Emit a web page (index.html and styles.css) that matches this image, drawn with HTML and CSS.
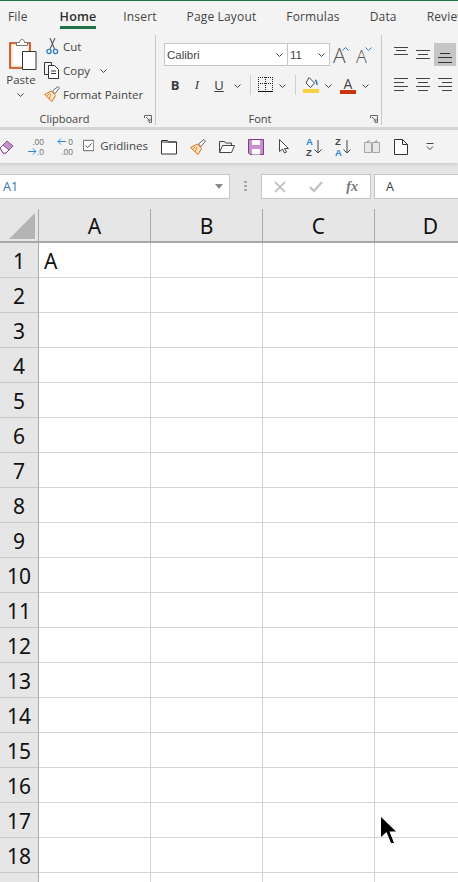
FILE: index.html
```html
<!DOCTYPE html>
<html lang="en">
<head>
<meta charset="utf-8">
<title>Excel</title>
<link rel="stylesheet" href="styles.css">
</head>
<body>
<div class="app">
  <header class="ribbon">
    <nav class="tabs">
      <span class="tab">File</span>
      <span class="tab active">Home</span>
      <span class="tab">Insert</span>
      <span class="tab">Page Layout</span>
      <span class="tab">Formulas</span>
      <span class="tab">Data</span>
      <span class="tab">Review</span>
    </nav>
    <div class="groups">
      <section class="group clipboard">
        <div class="group-body clip-body">
          <div class="paste">
            <svg class="paste-icon" width="28" height="31" viewBox="0 0 28 31"><path d="M1 4h20v25H1z" fill="#f8e4b0" stroke="#c5421c" stroke-width="1.600"/><path d="M3.500 6.500h15v20h-15z" fill="#fff"/><path d="M7.500 6.500V3.500h3c0-4 5-4 5 0h3v3z" fill="#fff" stroke="#777"/><path d="M13.500 12.500h13.500v18H13.500z" fill="#fff" stroke="#333"/></svg>
            <span class="paste-label">Paste</span>
            <svg class="chev" width="7" height="4" viewBox="0 0 7 4"><path d="M.5.5l3 3 3-3" fill="none" stroke="#444"/></svg>
          </div>
          <div class="clip-actions">
            <div class="clip-row">
              <svg class="clip-icon" width="16" height="17" viewBox="0 0 16 17"><path d="M6 0l4.500 11M11 0L6 11" fill="none" stroke="#555" stroke-width="1.100"/><circle cx="5" cy="13.500" r="2.100" fill="#fff" stroke="#2b78c2" stroke-width="1.300"/><circle cx="11.500" cy="13.500" r="2.100" fill="#fff" stroke="#2b78c2" stroke-width="1.300"/></svg>
              <span>Cut</span>
            </div>
            <div class="clip-row">
              <svg class="clip-icon" width="16" height="17" viewBox="0 0 16 17"><path d="M4.500 12.500H.5V.5h7v3" fill="none" stroke="#333"/><path d="M4.500 3.500h6l4 4v9h-10z" fill="#fff" stroke="#333"/><path d="M7 9h5M7 11.500h5" stroke="#333"/></svg>
              <span>Copy</span>
              <svg class="chev copy-chev" width="7" height="4" viewBox="0 0 7 4"><path d="M.5.5l3 3 3-3" fill="none" stroke="#444"/></svg>
            </div>
            <div class="clip-row">
              <svg class="clip-icon" width="16" height="17" viewBox="0 0 16 17"><path d="M8.500 5L14 .5 15.500 2 11 7.500z" fill="#fff" stroke="#666"/><path d="M.5 8.500L7.500 5l4 4.500L8 15.500z" fill="#fbe6c4" stroke="#e4701a"/><path d="M5 13l2-5M2.500 10.500L5.500 7.500" stroke="#e4701a" stroke-width=".8"/></svg>
              <span>Format Painter</span>
            </div>
          </div>
        </div>
        <footer class="group-label">
          <span>Clipboard</span>
          <svg class="launcher" width="8" height="8" viewBox="0 0 8 8"><path d="M.5 3V.5H7.500V7.500H5M2 2l4 4M6 3.500V6H3.500" fill="none" stroke="#666"/></svg>
        </footer>
      </section>
      <section class="group font">
        <div class="group-body font-body">
          <div class="font-row1">
            <div class="combo name-combo"><span>Calibri</span><svg class="chev" width="7" height="4" viewBox="0 0 7 4"><path d="M.5.5l3 3 3-3" fill="none" stroke="#444"/></svg></div>
            <div class="combo size-combo"><span>11</span><svg class="chev" width="7" height="4" viewBox="0 0 7 4"><path d="M.5.5l3 3 3-3" fill="none" stroke="#444"/></svg></div>
            <span class="grow-a">A<svg class="caret" width="7" height="4" viewBox="0 0 7 4"><path d="M.5 3.500l3-3 3 3" fill="none" stroke="#2b78c2"/></svg></span>
            <span class="grow-a small-a">A<svg class="caret" width="7" height="4" viewBox="0 0 7 4"><path d="M.5.5l3 3 3-3" fill="none" stroke="#2b78c2"/></svg></span>
          </div>
          <div class="font-row2">
            <span class="fmt bold">B</span>
            <span class="fmt italic">I</span>
            <span class="fmt under">U</span>
            <svg class="chev fmt-chev" width="7" height="4" viewBox="0 0 7 4"><path d="M.5.5l3 3 3-3" fill="none" stroke="#444"/></svg>
            <i class="vsep"></i>
            <svg class="border-icon" width="15" height="16" viewBox="0 0 15 16"><path d="M.5 0v13M14.500 0v13M7.500 0v13M0 .5h15M0 6.500h15" fill="none" stroke="#222" stroke-dasharray="1 1"/><path d="M0 14.500h15" stroke="#111" stroke-width="1"/></svg>
            <svg class="chev fmt-chev" width="7" height="4" viewBox="0 0 7 4"><path d="M.5.5l3 3 3-3" fill="none" stroke="#444"/></svg>
            <i class="vsep"></i>
            <svg class="color-icon" width="16" height="16" viewBox="0 0 16 16"><path d="M6 .5l5.500 5.500-4 4.500L3 6z" fill="#fff" stroke="#444"/><path d="M12 3c2 1 2 3 2 5" fill="none" stroke="#2b78c2" stroke-width="1.400"/><rect y="12" width="16" height="4" fill="#f5d33f"/></svg>
            <svg class="chev fmt-chev" width="7" height="4" viewBox="0 0 7 4"><path d="M.5.5l3 3 3-3" fill="none" stroke="#444"/></svg>
            <span class="color-a">A</span>
            <svg class="chev fmt-chev" width="7" height="4" viewBox="0 0 7 4"><path d="M.5.5l3 3 3-3" fill="none" stroke="#444"/></svg>
          </div>
        </div>
        <footer class="group-label">
          <span>Font</span>
          <svg class="launcher" width="8" height="8" viewBox="0 0 8 8"><path d="M.5 3V.5H7.500V7.500H5M2 2l4 4M6 3.500V6H3.500" fill="none" stroke="#666"/></svg>
        </footer>
      </section>
      <section class="group align">
        <div class="align-grid">
          <span class="al al-top"><svg width="14" height="8" viewBox="0 0 14 8"><path d="M0 .5h14M2 3.500h10M0 7.500h14" stroke="#444"/></svg></span>
          <span class="al al-mid"><svg width="14" height="9" viewBox="0 0 14 9"><path d="M0 .5h14M2 4.500h10M0 8.500h14" stroke="#444"/></svg></span>
          <span class="al al-on"><svg width="14" height="10" viewBox="0 0 14 10"><path d="M2 .5h10M0 4.500h14M0 9.500h14" stroke="#333"/></svg></span>
          <span class="al"><svg width="14" height="13" viewBox="0 0 14 13"><path d="M0 .5h14M0 4.500h10M0 8.500h14M0 12.500h10" stroke="#444"/></svg></span>
          <span class="al"><svg width="14" height="13" viewBox="0 0 14 13"><path d="M0 .5h14M2 4.500h10M0 8.500h14M2 12.500h10" stroke="#444"/></svg></span>
          <span class="al"><svg width="14" height="13" viewBox="0 0 14 13"><path d="M0 .5h14M4 4.500h10M0 8.500h14M4 12.500h10" stroke="#444"/></svg></span>
        </div>
      </section>
    </div>
  </header>

  <div class="qat">
    <svg class="qi" width="16" height="16" viewBox="0 0 16 16"><path d="M1 9l7-7 6 5-7 7H4z" fill="#c693c9" stroke="#8a4a8f"/><path d="M1 9l3-3 6 5-3 3H4z" fill="#fff" stroke="#8a4a8f"/></svg>
    <span class="dec">
      <span class="dec-line dec-right">.00</span>
      <span class="dec-line dec-arrow"><svg width="9" height="7" viewBox="0 0 9 7"><path d="M0 3.500h8M5 .5l3 3-3 3" fill="none" stroke="#2b88d8"/></svg><span>.0</span></span>
    </span>
    <span class="dec">
      <span class="dec-line dec-arrow"><svg width="9" height="7" viewBox="0 0 9 7"><path d="M1 3.500h8M4 .5l-3 3 3 3" fill="none" stroke="#2b88d8"/></svg><span>0</span></span>
      <span class="dec-line dec-right">.00</span>
    </span>
    <label class="grid-check">
      <svg width="13" height="13" viewBox="0 0 13 13"><path d="M.5.500h12v12H.5z" fill="#fff" stroke="#555"/><path d="M3 6.500l2.500 2.500 4.500-5" fill="none" stroke="#444" stroke-width="1.100"/></svg>
      <span>Gridlines</span>
    </label>
    <svg class="qi" width="16" height="16" viewBox="0 0 16 16"><path d="M.5 1.500h6l1 1.500h8v12H.5z" fill="#fff" stroke="#333"/><path d="M.5 3h15" stroke="#333"/></svg>
    <svg class="qi" width="16" height="16" viewBox="0 0 16 16"><path d="M8.500 5L14 .5 15.500 2 11 7.500z" fill="#fff" stroke="#666"/><path d="M.5 8.500L7.500 5l4 4.500L8 15.500z" fill="#fbe6c4" stroke="#e4701a"/><path d="M5 13l2-5M2.500 10.500L5.500 7.500" stroke="#e4701a" stroke-width=".8"/></svg>
    <svg class="qi" width="16" height="16" viewBox="0 0 16 16"><path d="M.5 13.500V2.500h5l1 1.500h6v2.500" fill="none" stroke="#444"/><path d="M.5 13.500l3-7h12l-3 7z" fill="#fff" stroke="#444"/></svg>
    <svg class="qi" width="16" height="16" viewBox="0 0 16 16"><path d="M.5.500h15v15H2L.5 14z" fill="#c98fce" stroke="#7d3c84"/><rect x="4" y="1" width="8" height="5" fill="#fff"/><rect x="4" y="10" width="8" height="5.500" fill="#fff"/></svg>
    <svg class="qi" width="16" height="16" viewBox="0 0 16 16"><path d="M2.500.500v12l3-2.500 2 4 2-1-2-3.500h4z" fill="#fff" stroke="#444"/></svg>
    <span class="sort">
      <span class="sort-letters"><span class="blue">A</span><span>Z</span></span>
      <svg width="8" height="14" viewBox="0 0 8 14"><path d="M4 0v13M.5 9.500L4 13l3.500-3.500" fill="none" stroke="#444"/></svg>
    </span>
    <span class="sort">
      <span class="sort-letters"><span>Z</span><span class="blue">A</span></span>
      <svg width="8" height="14" viewBox="0 0 8 14"><path d="M4 0v13M.5 9.500L4 13l3.500-3.500" fill="none" stroke="#444"/></svg>
    </span>
    <svg class="qi" width="16" height="16" viewBox="0 0 16 16"><path d="M.5 3.500h7v10h-7zM8.500 3.500h7v10h-7z" fill="#e8e8e8" stroke="#a6a6a6"/><path d="M2 3.500l3-2v2M10 3.500l3-2v2" fill="none" stroke="#a6a6a6"/></svg>
    <svg class="qi" width="16" height="16" viewBox="0 0 16 16"><path d="M1.500.500h8l5 5v10h-13z" fill="#fff" stroke="#333"/><path d="M9.500.500v5h5" fill="none" stroke="#333"/></svg>
    <svg class="qi" width="16" height="16" viewBox="0 0 16 16"><path d="M4.500 4.500h7" stroke="#444"/><path d="M5 7.500L8 10.500l3-3" fill="none" stroke="#444"/></svg>
  </div>

  <div class="formula-bar">
    <div class="name-box"><span>A1</span><i class="name-arrow"></i></div>
    <span class="dots"></span>
    <div class="fx-box">
      <svg width="12" height="12" viewBox="0 0 12 12"><path d="M1 1l10 10M11 1L1 11" stroke="#c4c4c4" stroke-width="1.800"/></svg>
      <svg width="14" height="12" viewBox="0 0 14 12"><path d="M1 6l4 4 8-9" fill="none" stroke="#c4c4c4" stroke-width="2.400"/></svg>
      <span class="fx">fx</span>
    </div>
    <div class="formula-input">A</div>
  </div>

  <main class="sheet">
    <div class="row head-row">
      <div class="corner"><i class="corner-tri"></i></div>
      <div class="col-head">A</div><div class="col-head">B</div><div class="col-head">C</div><div class="col-head">D</div>
    </div>
    <div class="row"><div class="row-head">1</div><div class="cell">A</div><div class="cell"></div><div class="cell"></div><div class="cell"></div></div>
    <div class="row"><div class="row-head">2</div><div class="cell"></div><div class="cell"></div><div class="cell"></div><div class="cell"></div></div>
    <div class="row"><div class="row-head">3</div><div class="cell"></div><div class="cell"></div><div class="cell"></div><div class="cell"></div></div>
    <div class="row"><div class="row-head">4</div><div class="cell"></div><div class="cell"></div><div class="cell"></div><div class="cell"></div></div>
    <div class="row"><div class="row-head">5</div><div class="cell"></div><div class="cell"></div><div class="cell"></div><div class="cell"></div></div>
    <div class="row"><div class="row-head">6</div><div class="cell"></div><div class="cell"></div><div class="cell"></div><div class="cell"></div></div>
    <div class="row"><div class="row-head">7</div><div class="cell"></div><div class="cell"></div><div class="cell"></div><div class="cell"></div></div>
    <div class="row"><div class="row-head">8</div><div class="cell"></div><div class="cell"></div><div class="cell"></div><div class="cell"></div></div>
    <div class="row"><div class="row-head">9</div><div class="cell"></div><div class="cell"></div><div class="cell"></div><div class="cell"></div></div>
    <div class="row"><div class="row-head">10</div><div class="cell"></div><div class="cell"></div><div class="cell"></div><div class="cell"></div></div>
    <div class="row"><div class="row-head">11</div><div class="cell"></div><div class="cell"></div><div class="cell"></div><div class="cell"></div></div>
    <div class="row"><div class="row-head">12</div><div class="cell"></div><div class="cell"></div><div class="cell"></div><div class="cell"></div></div>
    <div class="row"><div class="row-head">13</div><div class="cell"></div><div class="cell"></div><div class="cell"></div><div class="cell"></div></div>
    <div class="row"><div class="row-head">14</div><div class="cell"></div><div class="cell"></div><div class="cell"></div><div class="cell"></div></div>
    <div class="row"><div class="row-head">15</div><div class="cell"></div><div class="cell"></div><div class="cell"></div><div class="cell"></div></div>
    <div class="row"><div class="row-head">16</div><div class="cell"></div><div class="cell"></div><div class="cell"></div><div class="cell"></div></div>
    <div class="row"><div class="row-head">17</div><div class="cell"></div><div class="cell"></div><div class="cell"></div><div class="cell"></div></div>
    <div class="row"><div class="row-head">18</div><div class="cell"></div><div class="cell"></div><div class="cell"></div><div class="cell"></div></div>
    <div class="row"><div class="row-head"></div><div class="cell"></div><div class="cell"></div><div class="cell"></div><div class="cell"></div></div>
  </main>

  <svg class="cursor" width="16" height="27" viewBox="0 0 16 27"><path d="M0 0l15 14.500H8.500L13 26h-3L5.500 15 0 20z" fill="#000"/></svg>
</div>
</body>
</html>
```
FILE: styles.css
```css
* { box-sizing: border-box; }
html, body { margin: 0; padding: 0; }
body { width: 458px; height: 882px; overflow: hidden; background: #fff; font-family: "Open Sans", "Noto Sans", sans-serif; color: #444; }
.app { position: relative; width: 458px; height: 882px; overflow: hidden; }

/* ribbon */
.ribbon { height: 130px; background: #f3f3f3; border-top: 1px solid #217346; border-bottom: 3px solid #d5d5d5; overflow: hidden; }
.tabs { display: flex; height: 28px; padding-left: 8px; gap: 30px; font-size: 12px; letter-spacing: .15px; white-space: nowrap; color: #444; }
.tab { height: 28px; line-height: 31px; flex: none; }
.tab.active { color: #2f2f2f; font-size: 12.500px; font-weight: 600; border-bottom: 3px solid #217346; margin-left: 2px; margin-right: -3px; }
.groups { display: flex; height: 90px; margin-top: 6px; }
.group { position: relative; flex: none; display: flex; flex-direction: column; border-right: 1px solid #c8c8c8; }
.group-body { flex: 1; }
.clipboard { width: 156px; }
.font { width: 226px; }
.align { flex: 1; border-right: 0; }
.group-label { position: relative; height: 16px; text-align: center; font-size: 11px; line-height: 20px; color: #444; }
.clipboard .group-label { padding-right: 26px; text-align: center; }
.font .group-label { padding-right: 17px; }
.launcher { position: absolute; right: 3px; top: 6px; }

.clip-body { display: flex; }
.paste { width: 44px; display: flex; flex-direction: column; align-items: center; padding-top: 4px; }
.paste-icon { margin-left: 2px; }
.paste-label { font-size: 11.500px; line-height: 16px; margin-top: 2px; margin-left: -2px; color: #444; }
.paste .chev { margin-top: 5px; margin-left: -4px; }
.clip-actions { display: flex; flex-direction: column; padding-top: 3px; gap: 7px; }
.clip-row { display: flex; align-items: center; height: 17px; font-size: 11.500px; color: #444; white-space: nowrap; }
.clip-row span { margin-left: 3px; }
.clip-icon { flex: none; }
.copy-chev { margin-left: 10px; }
.chev { flex: none; display: block; }

.font-body { padding: 8px 0 0 8px; }
.font-row1 { display: flex; height: 23px; align-items: stretch; }
.combo { display: flex; align-items: center; justify-content: space-between; background: #fff; border: 1px solid #c6c6c6; font-size: 11.500px; color: #444; padding: 0 4px 0 2px; font-family: "Liberation Sans", "Open Sans", sans-serif; }
.name-combo { width: 124px; }
.size-combo { width: 43px; margin-left: -1px; }
.grow-a { position: relative; width: 23px; font-size: 21px; line-height: 24px; margin-left: 3px; color: #555; font-weight: 300; }
.small-a { font-size: 18px; width: 18px; margin-left: 0; line-height: 26px; }
.caret { position: absolute; top: 4px; right: 7px; }
.small-a .caret { right: 2px; }
.font-row2 { display: flex; align-items: center; height: 20px; margin-top: 9px; }
.fmt { width: 22px; font-size: 13px; color: #3a3a3a; text-align: center; flex: none; }
.bold { font-weight: 700; }
.italic { font-style: italic; font-family: "Liberation Serif", serif; }
.under { text-decoration: underline; }
.fmt-chev { margin: 2px 0 0 0; }
.under + .fmt-chev { margin-left: 4px; }
.vsep { width: 1px; height: 20px; background: #d0d0d0; margin: 0 7px 0 9px; flex: none; }
.border-icon, .color-icon { flex: none; margin-right: 6px; }
.color-icon + .fmt-chev { margin-right: 8px; }
.color-a { width: 16px; height: 18px; font-size: 14px; line-height: 15px; text-align: center; border-bottom: 4px solid #c7340e; color: #444; margin-right: 6px; flex: none; }

.align-grid { display: grid; grid-template-columns: 22px 22px 22px; grid-template-rows: 23px 23px; padding: 8px 0 0 8px; row-gap: 11px; }
.al { display: flex; justify-content: center; align-items: flex-start; padding-top: 1px; }
.al-top { padding-top: 4px; }
.al-mid { padding-top: 7px; }
.al-on { background: #c6c6c6; padding-top: 10px; }

/* quick access toolbar */
.qat { height: 33px; background: #f3f3f3; display: flex; align-items: center; gap: 13px; margin-left: -1px; box-shadow: 0 2px 3px rgba(0,0,0,.1); position: relative; }
.qi { flex: none; }
.dec { width: 16px; flex: none; display: flex; flex-direction: column; font-family: "Liberation Sans", sans-serif; font-size: 8.500px; line-height: 10px; color: #777; }
.dec-line { display: flex; justify-content: flex-end; align-items: center; height: 10px; }
.dec-arrow { justify-content: space-between; }
.grid-check { display: flex; align-items: center; gap: 5px; font-size: 11.500px; color: #444; flex: none; width: 65px; margin: 0 0 2px -3px; white-space: nowrap; }
.grid-check span { margin-left: 1px; }
.sort { display: flex; width: 16px; align-items: center; justify-content: center; gap: 1px; flex: none; }
.sort-letters { display: flex; flex-direction: column; font-family: "Liberation Sans", sans-serif; font-size: 9.500px; line-height: 11px; font-weight: 700; color: #444; }
.blue { color: #2b88d8; }

/* formula bar */
.formula-bar { height: 46px; background: #e6e6e6; display: flex; align-items: flex-start; padding-top: 11px; }
.name-box { width: 230px; height: 25px; background: #fff; border: 1px solid #c6c6c6; border-left: 0; display: flex; align-items: center; justify-content: space-between; padding: 0 6px 0 3px; font-size: 12.500px; color: #2f74b5; }
.name-arrow { width: 0; height: 0; border-left: 4px solid transparent; border-right: 4px solid transparent; border-top: 5px solid #8a8a8a; }
.dots { width: 3px; height: 10px; margin: 7px 13px 0 14px; background: repeating-linear-gradient(#a8a8a8 0 2px, transparent 2px 4px); flex: none; }
.fx-box { width: 110px; height: 25px; background: #fff; border: 1px solid #c6c6c6; margin-left: 1px; display: flex; align-items: center; justify-content: space-between; padding: 0 12px; flex: none; }
.fx { font-family: "Liberation Serif", serif; font-style: italic; font-size: 14px; font-weight: 700; color: #777; }
.formula-input { flex: 1; height: 25px; background: #fff; border: 1px solid #c6c6c6; border-right: 0; margin-left: 3px; padding-left: 11px; font-size: 12.500px; line-height: 23px; color: #3a3a3a; }

/* sheet */
.sheet { background: #fff; }
.row { display: flex; height: 35px; }
.head-row { height: 34px; }
.corner, .row-head { width: 39px; flex: none; background: #e6e6e6; border-right: 1px solid #a8a8a8; border-bottom: 1px solid #c8c8c8; }
.corner { position: relative; border-bottom: 2px solid #a8a8a8; }
.corner-tri { position: absolute; right: 3px; bottom: 2px; width: 0; height: 0; border-left: 26px solid transparent; border-bottom: 26px solid #b4b4b4; }
.col-head { width: 112px; flex: none; background: #e6e6e6; border-right: 1px solid #a8a8a8; border-bottom: 2px solid #a8a8a8; font-size: 21px; line-height: 35px; text-align: center; color: #111; font-family: "Noto Sans", sans-serif; }
.row-head { font-size: 21px; line-height: 34px; padding-top: 1px; text-align: center; color: #111; font-family: "Noto Sans", sans-serif; }
.cell { width: 112px; flex: none; border-right: 1px solid #d4d4d4; border-bottom: 1px solid #d4d4d4; font-size: 21px; line-height: 34px; padding: 1px 0 0 5px; color: #111; font-family: "Noto Sans", sans-serif; }

.cursor { position: absolute; left: 381px; top: 817px; }
```
